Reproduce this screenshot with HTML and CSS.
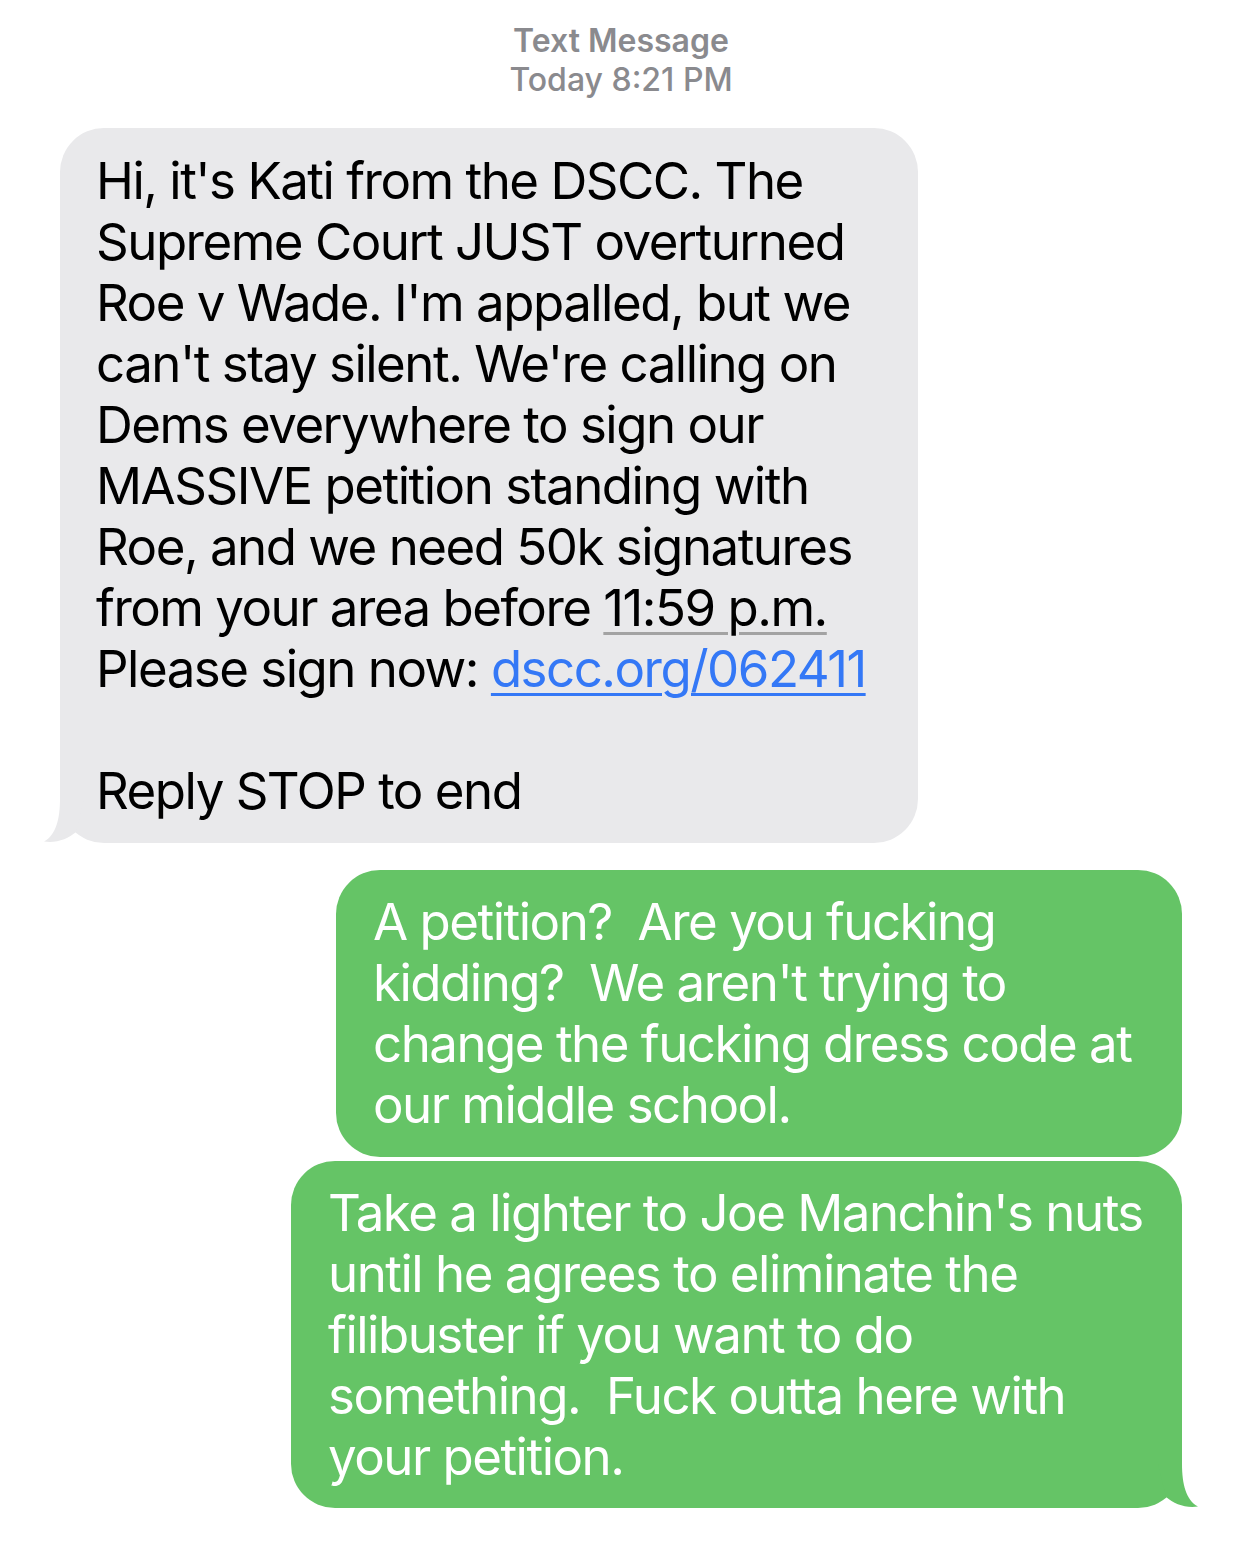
FILE: index.html
```html
<!DOCTYPE html>
<html lang="en">
<head>
<meta charset="UTF-8">
<meta name="viewport" content="width=device-width, initial-scale=1.0">
<title>Messages</title>
<link rel="stylesheet" href="styles.css">
</head>
<body>

<div class="thread">
  <div class="stamp">
    <div class="stamp-kind">Text Message</div>
    <div class="stamp-time">Today 8:21 PM</div>
  </div>

  <div class="bubble bubble-in">
    Hi, it's Kati from the DSCC. The<br>
    Supreme Court JUST overturned<br>
    Roe v Wade. I'm appalled, but we<br>
    can't stay silent. We're calling on<br>
    Dems everywhere to sign our<br>
    MASSIVE petition standing with<br>
    Roe, and we need 50k signatures<br>
    from your area before <span class="detected">11:59 p.m.</span><br>
    Please sign now: <a href="#" class="link">dscc.org/062411</a><br>
    <br>
    Reply STOP to end
    <svg class="tail tail-left" width="40" height="44" viewBox="0 0 40 44">
      <path d="M16,0 C16,20 12,36 0,42.5 C12,44.5 24,40 32,33 L40,0 Z" fill="#e9e9eb"/>
    </svg>
  </div>

  <div class="bubble bubble-out bubble-first">
    A petition?&nbsp; Are you fucking<br>
    kidding?&nbsp; We aren't trying to<br>
    change the fucking dress code at<br>
    our middle school.
  </div>

  <div class="bubble bubble-out bubble-last">
    Take a lighter to Joe Manchin's nuts<br>
    until he agrees to eliminate the<br>
    filibuster if you want to do<br>
    something.&nbsp; Fuck outta here with<br>
    your petition.
    <svg class="tail tail-right" width="40" height="44" viewBox="0 0 40 44">
      <path d="M16,0 C16,20 12,36 0,42.5 C12,44.5 24,40 32,33 L40,0 Z" fill="#65c466"/>
    </svg>
  </div>
</div>

</body>
</html>
```

FILE: styles.css
```css
/* Page */
body {
  margin: 0;
  background-color: #fff;
  font-family: Inter, "Noto Sans", "Liberation Sans", sans-serif;
}

.thread {
  display: flex;
  flex-direction: column;
  padding: 0 60px;
}

/* Timestamp header */
.stamp {
  align-self: center;
  text-align: center;
  padding-top: 21px;
  margin-bottom: 29px;
  color: #8a8a8e;
  font-size: 32px;
  line-height: 39px;
}

.stamp-kind {
  font-weight: 600;
}

.stamp-time {
  font-weight: 500;
}

/* Message bubbles */
.bubble {
  position: relative;
  box-sizing: border-box;
  border-radius: 44px;
  font-size: 51px;
  line-height: 61px;
  letter-spacing: -1.5px;
  white-space: nowrap;
}

.bubble-in {
  align-self: flex-start;
  width: 858px;
  padding: 22px 37px 22px 36px;
  background-color: #e9e9eb;
  color: #000;
}

.bubble-out {
  align-self: flex-end;
  background-color: #65c466;
  color: #fff;
}

.bubble-first {
  width: 846px;
  margin-top: 27px;
  padding: 21px 38px 22px 37px;
}

.bubble-last {
  width: 891px;
  margin-top: 4px;
  padding: 21px 38px 21px 37px;
}

.detected {
  text-decoration: underline;
  text-decoration-color: #a3a3a3;
  text-decoration-thickness: 3px;
  text-underline-offset: 6px;
}

.link {
  color: #3478f6;
  text-decoration: underline;
  text-decoration-thickness: 3px;
  text-underline-offset: 6px;
}

/* Bubble tails */
.tail {
  position: absolute;
  bottom: 0;
}

.tail-left {
  left: -16px;
}

.tail-right {
  right: -16px;
  transform: scaleX(-1);
}
```
